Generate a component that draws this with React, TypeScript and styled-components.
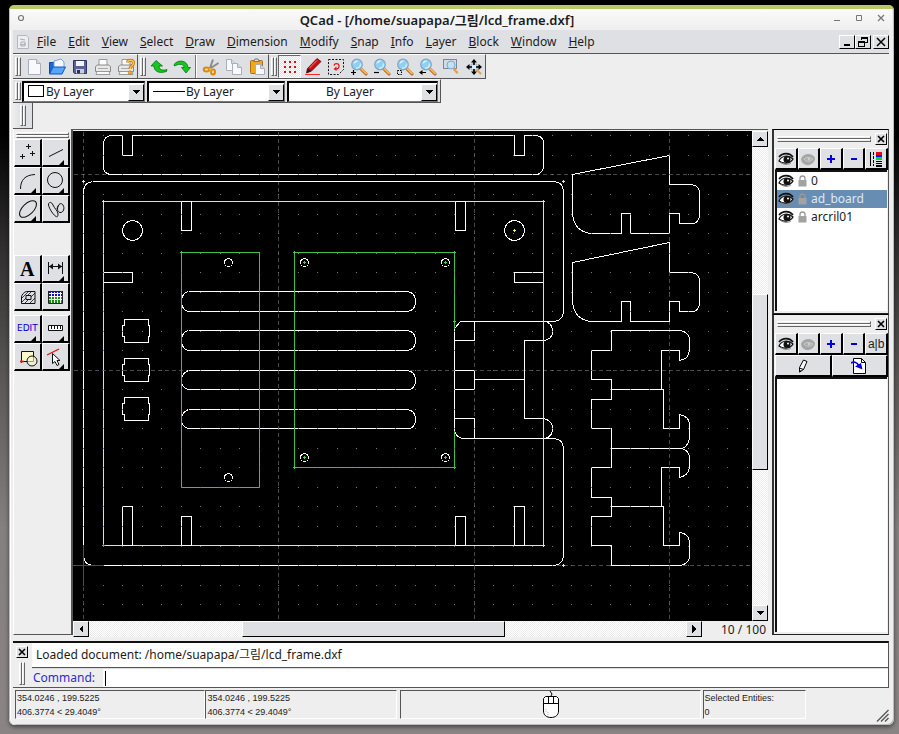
import React from "react";
import styled, { createGlobalStyle, css } from "styled-components";

const UI_FONT = '"Noto Sans", "Noto Sans CJK KR", sans-serif';
const FACE = "#dfe0e4";
const PANEL = "#eeeeee";
const SHADE = "#555555";

const GlobalStyle = createGlobalStyle`
  *, *::before, *::after { box-sizing: border-box; }
  body { margin: 0; font-family: ${UI_FONT}; font-size: 12px; color: #1c1c1c; }
  button, select, input { font: inherit; color: inherit; margin: 0; padding: 0; border-radius: 0; }
  svg { display: block; }
`;

const raised = css`
  border: 1px solid;
  border-color: #fff #000 #000 #fff;
  background: ${FACE};
`;

/* ---------- window ---------- */

const Desktop = styled.div`
  min-height: 100vh;
  display: flex;
  flex-direction: column;
  padding: 5px 5px 9px 9px;
  background: linear-gradient(#000 0, #000 18%, #2c2a2a 32%, #5c5858 52%, #858080 72%, #8a8484 100%);
`;

const Frame = styled.div`
  flex: 1;
  display: flex;
  flex-direction: column;
  padding: 0 5px 0 4px;
  border-top: 4px solid #bac767;
  border-radius: 5px 5px 6px 6px;
  background: ${PANEL};
  box-shadow: inset 1px 0 #bbb, inset 2px 0 #fff, inset -1px -1px #bbb, 0 2px 4px rgba(0, 0, 0, 0.5);
`;

const TitleBar = styled.header`
  display: grid;
  grid-template-columns: 36px 1fr 64px;
  align-items: center;
  height: 21px;
  margin: 0 -3px;
  background: linear-gradient(#fafafa, #efefef);
`;

const Title = styled.h1`
  margin: 0;
  text-align: center;
  font-size: 13px;
  font-weight: 600;
  line-height: 18px;
  white-space: nowrap;
`;

const TitleButtons = styled.div<{ $end?: boolean }>`
  display: flex;
  gap: 10px;
  justify-content: ${(p) => (p.$end ? "flex-end" : "flex-start")};
  padding: 0 5px 4px 4px;
`;

const FlatButton = styled.button`
  width: 12px;
  height: 12px;
  border: 0;
  background: none;
`;

const MenuBar = styled.nav`
  display: flex;
  align-items: center;
  height: 24px;
  padding-left: 3px;
  background: ${FACE};
  border-bottom: 1px solid ${SHADE};
`;

const MenuList = styled.div`
  flex: 1;
  display: flex;
  gap: 12px;
  padding-left: 7px;
`;

const MenuButton = styled.button`
  border: 0;
  background: none;
  line-height: 20px;
  white-space: nowrap;
`;

const Accel = styled.span`
  text-decoration: underline;
`;

const MdiButton = styled.button<{ $apart?: boolean }>`
  ${raised}
  display: grid;
  place-items: center;
  width: 16px;
  height: 14px;
  margin-left: ${(p) => (p.$apart ? 2 : 0)}px;
`;

/* ---------- toolbars ---------- */

const ToolRow = styled.div<{ $height: number }>`
  display: flex;
  height: ${(p) => p.$height}px;
`;

const ToolGroup = styled.div`
  display: flex;
  align-items: center;
  padding-left: 2px;
  background: ${FACE};
  border: solid;
  border-width: 1px 1px 1px 0;
  border-color: #fff ${SHADE} ${SHADE} #fff;
`;

const Grip = styled.span`
  display: flex;
  align-self: stretch;
  margin: 2px 1px 2px 0;
  &::before,
  &::after {
    content: "";
    width: 3px;
    border: 1px solid;
    border-color: #fff #666 #666 #fff;
  }
`;

const ToolButton = styled.button<{ $on?: boolean }>`
  display: grid;
  place-items: center;
  width: 23px;
  height: 23px;
  border: 1px solid;
  border-color: ${(p) => (p.$on ? "#666 #fff #fff #666" : "transparent")};
  background: ${(p) => (p.$on ? "repeating-conic-gradient(#fff 0 25%, #e2e2e6 0 50%) 0 0 / 2px 2px" : "none")};
`;

const Separator = styled.span`
  align-self: stretch;
  width: 2px;
  margin: 0 2px;
  border-left: 1px solid #777;
  border-right: 1px solid #fff;
`;

const ComboBox = styled.label<{ $width: number }>`
  position: relative;
  display: flex;
  width: ${(p) => p.$width}px;
  height: 21px;
  margin-right: 2px;
  border: 1px solid #777;
  border-width: 2px 1px 1px 2px;
  border-color: #000 #777 #777 #000;
  background: #fff;
`;

const ComboSelect = styled.select<{ $indent: number }>`
  width: 100%;
  padding-left: ${(p) => p.$indent}px;
  border: 0;
  outline: 0;
  appearance: none;
  background: none;
  line-height: 17px;
`;

const ComboPreview = styled.span`
  position: absolute;
  inset: 0 auto 0 4px;
  display: grid;
  place-items: center;
  pointer-events: none;
`;

const ComboArrow = styled.span`
  ${raised}
  position: absolute;
  inset: 1px 0 0 auto;
  width: 16px;
  display: grid;
  place-items: center;
  pointer-events: none;
`;

const EmptyBar = styled.div`
  display: flex;
  width: 20px;
  padding-left: 7px;
  background: linear-gradient(90deg, #eee, ${FACE} 40%);
  border-right: 1px solid ${SHADE};
  border-bottom: 1px solid ${SHADE};
`;

/* ---------- workspace ---------- */

const Workspace = styled.main`
  flex: 1;
  display: flex;
  min-height: 508px;
`;

const CadBar = styled.aside`
  width: 60px;
  flex: none;
  padding: 3px 1px 0 0;
  margin-bottom: 2px;
  border-right: 2px solid ${SHADE};
  border-bottom: 1px solid ${SHADE};
  border-left: 1px solid #fff;
`;

const WideGrip = styled.div`
  flex: 1;
  margin: 0 1px 1px 2px;
  &::before,
  &::after {
    content: "";
    display: block;
    height: 3px;
    border: 1px solid;
    border-color: #fff #666 #666 #fff;
  }
`;

const CadGrid = styled.div<{ $after: number }>`
  display: grid;
  grid-template-columns: 28px 28px;
  margin-bottom: ${(p) => p.$after}px;
`;

const CadButton = styled.button`
  ${raised}
  height: 28px;
  border-width: 1px 2px 2px 1px;
`;

const ViewArea = styled.section`
  flex: 1;
  min-width: 0;
  display: grid;
  grid-template-columns: 1fr 16px;
  grid-template-rows: 1fr 16px;
  margin-right: 4px;
  border-top: 1px solid ${SHADE};
  padding-top: 1px;
`;

const Drawing = styled.svg`
  width: 100%;
  height: 100%;
  background: #000;
  shape-rendering: crispEdges;
`;

const CanvasCell = styled.div`
  min-width: 0;
  min-height: 0;
  overflow: hidden;
  contain: size;
`;

const ScrollTrack = styled.div<{ $row?: boolean }>`
  flex: 1;
  display: flex;
  flex-direction: ${(p) => (p.$row ? "row" : "column")};
  background: repeating-conic-gradient(#fff 0 25%, #ececec 0 50%) 0 0 / 2px 2px;
`;

const ScrollButton = styled.button`
  ${raised}
  display: grid;
  place-items: center;
  flex: none;
  width: 16px;
  height: 16px;
`;

const Space = styled.span<{ $grow: number }>`
  flex: ${(p) => p.$grow} 1 0;
`;

const Thumb = styled.span<{ $grow: number }>`
  ${raised}
  flex: ${(p) => p.$grow} 1 0;
`;

const BottomRow = styled.div`
  grid-column: 1 / -1;
  display: flex;
`;

const ZoomInfo = styled.output`
  width: 66px;
  padding-right: 2px;
  text-align: right;
  line-height: 17px;
`;

/* ---------- docks ---------- */

const DockColumn = styled.aside`
  display: flex;
  flex-direction: column;
  width: 117px;
  flex: none;
  margin-bottom: 2px;
`;

const Dock = styled.section<{ $height?: number }>`
  display: flex;
  flex-direction: column;
  flex: ${(p) => (p.$height ? "none" : 1)};
  height: ${(p) => (p.$height ? p.$height + "px" : "auto")};
  padding: 0 0 2px 1px;
  border: 1px solid;
  border-width: 1px 1px 1px 2px;
  border-color: #000 ${SHADE} #222 #333;
`;

const DockHead = styled.div`
  display: flex;
  align-items: center;
  gap: 3px;
  height: 18px;
  padding-right: 1px;
`;

const CloseButton = styled.button`
  ${raised}
  display: grid;
  place-items: center;
  flex: none;
  width: 12px;
  height: 12px;
`;

const DockButtons = styled.div`
  display: flex;
`;

const DockButton = styled.button`
  ${raised}
  flex: 1;
  min-width: 0;
  height: 22px;
  display: grid;
  place-items: center;
  border-width: 1px 2px 2px 1px;
  font-family: "Liberation Sans", sans-serif;
`;

const LayerList = styled.ul`
  flex: 1;
  margin: 0 1px 0 0;
  padding: 0;
  list-style: none;
  background: #fff;
  border: solid #111;
  border-width: 2px 0 0 2px;
`;

const LayerItem = styled.li<{ $selected?: boolean }>`
  display: flex;
  align-items: center;
  gap: 4px;
  height: 18px;
  padding-left: 1px;
  line-height: 18px;
  color: ${(p) => (p.$selected ? "#dde9f5" : "#1c1c1c")};
  background: ${(p) => (p.$selected ? "#688db2" : "none")};
`;

/* ---------- command line and status ---------- */

const CommandDock = styled.section`
  display: flex;
  height: 47px;
  margin-top: 4px;
  border: solid;
  border-width: 2px 1px 1px 0;
  border-color: #111 ${SHADE} ${SHADE};
`;

const CommandSide = styled.div`
  display: flex;
  flex-direction: column;
  align-items: center;
  gap: 2px;
  width: 19px;
  padding: 3px 1px 0 0;
`;

const SideGrip = styled(Grip)`
  flex: 1;
  align-self: center;
`;

const CommandBody = styled.div`
  flex: 1;
  min-width: 0;
  display: flex;
  flex-direction: column;
`;

const History = styled.div`
  height: 25px;
  padding-left: 4px;
  line-height: 23px;
  background: #fff;
  border-bottom: 1px solid ${SHADE};
`;

const CommandRow = styled.div`
  flex: 1;
  display: flex;
  align-items: center;
  border-top: 1px solid #ddd;
  background: #fff;
`;

const CommandLabel = styled.label`
  align-self: stretch;
  width: 71px;
  padding-left: 1px;
  line-height: 18px;
  color: #2d2dd0;
  background: ${PANEL};
`;

const Caret = styled.span`
  width: 1px;
  height: 15px;
  margin-left: 2px;
  background: #000;
`;

const CommandInput = styled.input`
  flex: 1;
  min-width: 0;
  border: 0;
  outline: 0;
  background: none;
`;

const StatusBar = styled.footer`
  display: flex;
  height: 37px;
  padding: 2px 0 6px 2px;
  font: 9px/14px "Liberation Sans", sans-serif;
`;

const StatusCell = styled.div<{ $grow: number; $after?: number }>`
  flex: ${(p) => p.$grow} 1 0;
  display: flex;
  flex-direction: column;
  min-width: 0;
  margin-right: ${(p) => p.$after ?? 0}px;
  padding-left: 1px;
  white-space: nowrap;
  border: 1px solid;
  border-color: ${SHADE} #fff #fff ${SHADE};
`;

const MouseHint = styled.div`
  align-self: center;
`;

const SizeGrip = styled.div`
  flex: 84 1 0;
  display: flex;
  justify-content: flex-end;
  align-items: flex-end;
  margin-bottom: -3px;
`;

/* ---------- icons ---------- */

const Svg = ({ w = 18, h = w, crisp, children }: { w?: number; h?: number; crisp?: boolean; children: React.ReactNode }) => (
  <svg width={w} height={h} viewBox={`0 0 ${w} ${h}`} fill="none" aria-hidden="true" shapeRendering={crisp ? "crispEdges" : "auto"}>
    {children}
  </svg>
);

const Lens = ({ children }: { children?: React.ReactNode }) => (
  <Svg>
    <path d="M10.5 10.5L16 16" stroke="#a85c10" strokeWidth="3" strokeLinecap="round" />
    <path d="M11 10.5L16 15.5" stroke="#f3b45a" strokeWidth="2" strokeLinecap="round" />
    <circle cx="7" cy="6.5" r="5.3" fill="#8fd0f2" stroke="#8aa4c0" strokeWidth="1.2" />
    <path d="M3.5 6a3.6 3.6 0 0 1 5-3.2C7 3.800 5 5 3.500 6z" fill="#e2f6ff" />
    <path d="M6 10a4 4 0 0 0 4.600-4.500" stroke="#c8eefc" strokeWidth="1.400" />
    {children}
  </Svg>
);

const Sheet = ({ x, y, w, h }: { x: number; y: number; w: number; h: number }) => (
  <g>
    <path d={`M${x} ${y}h${w - 4}l4 4v${h - 4}h-${w}z`} fill="#f8f9fd" stroke="#a9aebc" />
    <path d={`M${x + w - 4} ${y}v4h4`} fill="#d5d9e6" stroke="#a9aebc" />
  </g>
);

const PrinterBody = () => (
  <g>
    <path d="M5 8V1.500h8V8" fill="#fff" stroke="#999" />
    <path d="M1.500 8.500l2-1.500h11l2 1.500v5h-15z" fill="#e8e8e8" stroke="#888" />
    <path d="M3 13.500l-1 3h14l-1-3z" fill="#fafafa" stroke="#999" />
    <path d="M4 10.500h10" stroke="#aaa" />
  </g>
);

const NewIcon = () => <Svg><Sheet x={3.5} y={1.5} w={12} h={15} /></Svg>;
const OpenIcon = () => (
  <Svg>
    <path d="M1.500 15.500v-11h5l1.500 2h6v9z" fill="#1c66d8" stroke="#1147a5" />
    <path d="M6 10V3l7-2 3 3v6z" fill="#f4f8ff" stroke="#7aa0d8" />
    <path d="M1.500 16L5 9h12.500l-3.500 7z" fill="#55a7fb" stroke="#1454b8" />
  </Svg>
);
const SaveIcon = () => (
  <Svg>
    <path d="M2.500 2.500h13v13h-12l-1-1z" fill="#5c6394" stroke="#2f3560" />
    <path d="M5 3h8v5H5z" fill="#f2f4fb" />
    <path d="M5 11h8v4.500H5z" fill="#c9cddd" />
    <path d="M6 12h3v3.500H6z" fill="#2b3058" />
  </Svg>
);
const PrintIcon = () => <Svg><PrinterBody /></Svg>;
const PreviewIcon = () => (
  <Svg>
    <PrinterBody />
    <path d="M10.500 4.500c.5-3 6-3 6 .5 0 3-3.500 3-3.500 6" stroke="#c06f00" strokeWidth="3" />
    <path d="M10.500 4.500c.5-3 6-3 6 .5 0 3-3.500 3-3.500 6" stroke="#ffc04a" strokeWidth="1.600" />
    <circle cx="13" cy="14.500" r="1.700" fill="#ffb02e" stroke="#c06f00" strokeWidth=".7" />
  </Svg>
);
const UndoIcon = () => (
  <Svg><path d="M6 2.500L1 8h3c0 5 4.500 8 12.500 5.500l.5-2c-5 1.500-8 0-8-3.500h3.500z" fill="#14c81e" stroke="#06720c" strokeWidth=".8" /></Svg>
);
const RedoIcon = () => (
  <Svg><path d="M13 15L8.500 9.500H11C11 6.500 7 5 1.500 8l-.5-1.500C6 .5 14.500 3 15 9.500h2.500z" fill="#14c81e" stroke="#06720c" strokeWidth=".8" /></Svg>
);
const CutIcon = () => (
  <Svg>
    <path d="M11 1.500L8 10M16.500 5L6.500 11.500" stroke="#8b8b8b" strokeWidth="2" />
    <ellipse cx="4.500" cy="11.500" rx="2.800" ry="2" stroke="#e08a00" strokeWidth="2" />
    <ellipse cx="11" cy="14" rx="2" ry="2.400" stroke="#e08a00" strokeWidth="2" />
    <path d="M7 10.500l2.500 1.500" stroke="#f8b030" strokeWidth="2" />
  </Svg>
);
const CopyIcon = () => <Svg><Sheet x={1.5} y={1.5} w={9} h={11} /><Sheet x={7.5} y={5.5} w={9} h={11} /></Svg>;
const PasteIcon = () => (
  <Svg>
    <rect x="2.500" y="2.500" width="12" height="13" rx="1" fill="#f0a81c" stroke="#a87010" />
    <path d="M5.500 3.500l1.500-2.500h3l1.500 2.500z" fill="#ddd" stroke="#777" />
    <Sheet x={7.5} y={6.5} w={9} h={10} />
  </Svg>
);
const GridIcon = () => (
  <Svg crisp>
    {[3, 8, 13].map((x) => [3, 8, 13].map((y) => <rect key={`${x}-${y}`} x={x} y={y} width="2" height="2" fill="#d11414" />))}
  </Svg>
);
const DraftIcon = () => (
  <Svg>
    <path d="M1 16.500h15" stroke="#ff2525" />
    <path d="M13 0.500l4 3L7.500 13l-5 2 1-4.500z" fill="#c81010" stroke="#5e0505" strokeWidth=".8" />
    <path d="M3.500 10.500l4 2.500-5 2z" fill="#222" />
    <path d="M13 2.500L5.500 10" stroke="#ff7b7b" />
  </Svg>
);
const RedrawIcon = () => (
  <Svg>
    <path d="M1.500 1.500h15v10l-5 5h-10z" stroke="#111" strokeDasharray="2 1.500" />
    <path d="M7 7.500c.5-2.500 4.500-2.500 5 0s-1.500 3.500-3 3.500" stroke="#e01818" strokeWidth="1.300" />
    <path d="M9.500 8.500L6.500 11l3 2z" fill="#e01818" />
  </Svg>
);
const ZoomInIcon = () => <Lens><path d="M1 14.500h5M3.500 12v5" stroke="#000" strokeWidth="1.200" /></Lens>;
const ZoomOutIcon = () => <Lens><path d="M1 14.500h5" stroke="#000" strokeWidth="1.200" /></Lens>;
const ZoomAutoIcon = () => <Lens><path d="M1.500 12.500h4v4h-4z" stroke="#000" strokeDasharray="1.500 1" /></Lens>;
const ZoomPrevIcon = () => <Lens><path d="M2 14.500h5" stroke="#000" /><path d="M0 14.500l3.500-2.500v5z" fill="#000" /></Lens>;
const ZoomWindowIcon = () => (
  <Svg>
    <rect x="1.500" y="1.500" width="13" height="9" fill="#d4dbe4" stroke="#7c8796" />
    <path d="M12 11l3 3.500" stroke="#e0a050" strokeWidth="2.400" strokeLinecap="round" />
    <circle cx="9" cy="7" r="4" fill="#bfe0f5" stroke="#7fa8cc" />
  </Svg>
);
const PanIcon = () => (
  <Svg>
    <path d="M11 11l4.500 4.500" stroke="#e0a050" strokeWidth="2" strokeLinecap="round" />
    <circle cx="9" cy="9" r="3.500" fill="#d5ebf8" stroke="#9ab" />
    <path d="M9 3v4M9 11v4M3 9h4M11 9h4" stroke="#000" strokeWidth="1.600" />
    <path d="M9 1l3 3.500H6zM9 17l3-3.500H6zM1 9l3.500-3v6zM17 9l-3.500-3v6z" fill="#000" />
  </Svg>
);
const DocIcon = () => (
  <Svg w={14} h={16}>
    <path d="M1.500 1.500h9l2 2v11h-11z" fill="#eceef2" stroke="#b4b7be" />
    <path d="M4 5l5 1M4 11l6-1M5 8h4v4H5z" stroke="#a9adb5" />
  </Svg>
);

const ArrowGlyph = ({ d }: { d: string }) => <Svg w={8} crisp><path d={d} fill="#000" /></Svg>;
const UP = "M0 6h8L4 2z";
const DOWN = "M0 2h8L4 6z";
const LEFT = "M6 0v8L2 4z";
const RIGHT = "M2 0v8l4-4z";

const CloseGlyph = () => <Svg w={8}><path d="M1 1l6 6M7 1L1 7" stroke="#000" strokeWidth="1.600" /></Svg>;

const EyeIcon = ({ off }: { off?: boolean }) =>
  off ? (
    <Svg w={16} h={14}>
      <path d="M1 7C3 1 12 0 15 6c0 4-4 8-9 7C3 12 1 10 1 7z" fill="#a6a6a6" />
      <path d="M4 7c2-2 6-2 9 0-3 3-6 3-9 0z" stroke="#ccc" />
      <circle cx="9" cy="7" r="1.500" fill="#ccc" />
    </Svg>
  ) : (
    <Svg w={16} h={14}>
      <path d="M1 9c2-5 9-7 14-2-2 4-9 6-14 2z" fill="#fff" stroke="#111" strokeWidth="1.200" />
      <path d="M1 5c4-5 11-4 14 0" stroke="#111" strokeWidth="1.600" />
      <circle cx="9" cy="7.500" r="3.500" fill="#111" />
      <circle cx="10" cy="6.500" r="1" fill="#fff" />
      <path d="M3 10.500c3 2.500 7 2.500 10 .5" stroke="#888" />
    </Svg>
  );
const LockIcon = () => (
  <Svg w={9} h={12}>
    <path d="M2 6V3.500a2.500 2.500 0 0 1 5 0V6" stroke="#999" strokeWidth="1.300" />
    <rect x=".5" y="5" width="8" height="6.500" fill="#a2a2a2" />
  </Svg>
);
const PlusIcon = () => <Svg w={10} crisp><path d="M5 1v8M1 5h8" stroke="#0000e0" strokeWidth="2" /></Svg>;
const MinusIcon = () => <Svg w={10} crisp><path d="M2 5h6" stroke="#0000e0" strokeWidth="2" /></Svg>;
const AttributesIcon = () => (
  <Svg w={14} h={16} crisp>
    <path d="M1.500 1v14" stroke="#000" />
    <path d="M4.500 1v14" stroke="#000" strokeDasharray="3 1" />
    <path d="M7 2.500h6" stroke="#f00018" strokeWidth="3" />
    <path d="M7 5h6" stroke="#0018e8" strokeWidth="2" />
    <path d="M7 7.500h6" stroke="#00d838" strokeWidth="3" />
    <path d="M7 10.500h6" stroke="#000" />
    <path d="M7 12.500h6" stroke="#000" />
    <path d="M7 15h6" stroke="#000" strokeWidth="2" />
  </Svg>
);
const PencilIcon = () => (
  <Svg w={14} h={14}>
    <path d="M3.500 8.500l4-7.500 3.500 1.500-3.500 8-4 2.500zM3.500 9l4 1.500" fill="#fff" stroke="#000" />
    <path d="M3.500 13.500V11l2 1z" fill="#000" />
  </Svg>
);
const InsertIcon = () => (
  <Svg w={16} h={16}>
    <path d="M2.500 .5h8l4 4v11h-12z" fill="#fff" stroke="#000" />
    <path d="M10.500 .5v4h4" stroke="#000" />
    <path d="M0 5c2-1.500 6-1.500 8 3" stroke="#0000e0" strokeWidth="1.800" />
    <path d="M4 8.500l6-3.500 1.500 6.500z" fill="#0000e0" />
  </Svg>
);

const Corner = <path d="M21 20v5h-5z" fill="#000" />;
const CadSvg = ({ more, children }: { more?: boolean; children: React.ReactNode }) => (
  <Svg w={25}>
    <g stroke="#111">{children}</g>
    {more && Corner}
  </Svg>
);

const SerifText = styled.text`
  font: bold 20px "Liberation Serif", serif;
  fill: #000;
  stroke: none;
`;
const EditText = styled.text`
  font: 9px "DejaVu Sans", sans-serif;
  fill: #0000d0;
  stroke: none;
`;

const drawTools: [string, React.ReactNode][] = [
  ["Points", <CadSvg><path d="M13.500 4v5M11 6.500h5M7.500 14v5M5 16.500h5M17.500 11v5M15 13.500h5" /></CadSvg>],
  ["Lines", <CadSvg more><path d="M6 16.500L20 9.500" /></CadSvg>],
  ["Arcs", <CadSvg more><path d="M5.500 21C5.500 12 10 7 20 6.500" /></CadSvg>],
  ["Circles", <CadSvg more><circle cx="12" cy="12" r="7.500" /></CadSvg>],
  ["Ellipses", <CadSvg more><ellipse cx="13" cy="13" rx="10.500" ry="5.500" transform="rotate(-44 13 13)" /></CadSvg>],
  ["Splines", <CadSvg><path d="M13 20.500C9 18 5 10 5.500 8s3-2.500 4.500 1 5 6 5 9-1 3-2 2.500zM14 13C15 8 18 6 20 9s.5 8-3 7.500-3-6-.5-8" /></CadSvg>],
];
const textTools: [string, React.ReactNode][] = [
  ["Text", <CadSvg><SerifText x="5" y="20">A</SerifText></CadSvg>],
  ["Dimensions", <CadSvg more><path d="M5.500 6v12M19.500 6v12M6 10.500h13" /><path d="M6 10.500l4-3v6zM19 10.500l-4-3v6z" fill="#111" stroke="none" /></CadSvg>],
  ["Hatch", (
    <CadSvg>
      <path d="M6.500 19.500V13c0-2 3-5.500 5-5.500h8.500v12zM11 11.500h5v4h-5z" />
      <path d="M7 14l6-6M7 18l4-4M10 19l4-4M13 11l3.500-3.500M15 19l5-5M16 13l4-4" strokeWidth=".8" />
    </CadSvg>
  )],
  ["Bitmap", (
    <CadSvg>
      <rect x="5" y="7" width="15" height="6" fill="#1010c8" stroke="none" />
      <rect x="5" y="13" width="15" height="6" fill="#109010" stroke="none" />
      <path d="M5 9.500h15M5 12.500h15M5 15.500h15M8.500 7v12M11.500 7v12M14.500 7v12M17.500 7v12" stroke="#fff" shapeRendering="crispEdges" />
      <path d="M5.500 19V7.500h14V19.500h-14z" stroke="#222" />
    </CadSvg>
  )],
];
const editTools: [string, React.ReactNode][] = [
  ["Edit", <CadSvg more><EditText x="2" y="15">EDIT</EditText></CadSvg>],
  ["Measure", <CadSvg more><path d="M5.500 9.500h14v5h-14zM8.500 10v3M11.500 10v3M14.500 10v3M17.500 10v3" fill="#fff" /></CadSvg>],
  ["Blocks", <CadSvg><path d="M6.500 7.500h12v10h-12z" fill="#fbf8cc" /><circle cx="17" cy="17" r="5" fill="#fbf8cc" fillOpacity=".6" /><path d="M5 17.500h4M6.500 16v3" stroke="#e01010" strokeWidth="1.500" /></CadSvg>],
  ["Select", <CadSvg more><path d="M4 11L16 5" stroke="#e01010" strokeWidth="1.300" /><path d="M9.500 9.500v10l2.500-2 2 4 2-1-2-4h3z" fill="#fff" /></CadSvg>],
];

/* ---------- CAD drawing ---------- */

const STEP = 19.53;
const dotColumns = Array.from({ length: 36 }, (_, i) => Math.floor(83.5 + i * STEP));
const dotRows = Array.from({ length: 26 }, (_, i) => Math.floor(604.6 - i * STEP));

const box = (x1: number, y1: number, x2: number, y2: number) => `M${x1} ${y1}H${x2}V${y2}H${x1}Z`;
const cross = (x: number, y: number) => `M${x - 1.5} ${y}h3M${x} ${y - 1.5}v3`;
const pill = (y: number, y2: number) =>
  `M188 ${y}H407Q415 ${y + 1} 415 ${y + 10}T407 ${y2}H188Q181 ${y2 - 2} 181 ${y + 10}T188 ${y}`;
const lug = (y: number) =>
  `M124 ${y}H148V${y + 6}H149V${y + 17}H148V${y + 23}H124V${y + 17}H122V${y + 6}H124Z`;
const bracket = (top: number, peak: number) =>
  `M572 ${top}L669 ${peak}V${top + 10}H691Q699 ${top + 11} 699 ${top + 19}V${top + 40}Q699 ${top + 49} 691 ${top + 49}H679V${top + 39}H669V${top + 59}H630V${top + 39}H621V${top + 59}H590Q574 ${top + 57} 572 ${top + 40}Z`;

const whitePaths = [
  "M132 135H514V155H524V135H536Q543 136 543 143V167Q542 172 537 174H109Q103 172 103 167V142Q104 136 110 135H122V155H132Z",
  "M92 181H554Q562 182 563 190V312Q562 320 554 321H460L454 328V430Q456 438 464 438H554Q562 439 563 447V556Q562 564 554 565H92Q84 564 83 556V190Q84 182 92 181",
  "M545 321Q552 323 552 331T543 340H524V418H543Q552 420 552 428T545 438",
  "M454 340H474V321M454 370H474V389H454M474 379H524M454 418H474V438",
  box(181, 201, 191, 230), box(455, 201, 465, 230), box(103, 272, 132, 282), box(514, 272, 543, 282),
  box(122, 506, 132, 545), box(181, 516, 191, 545), box(455, 516, 465, 545), box(514, 506, 524, 545),
  pill(291, 311), pill(330, 350), pill(370, 389), pill(409, 428),
  lug(319), lug(358), lug(397),
  bracket(174, 155), bracket(262, 242),
  "M611 350V330H680Q689 332 689 340V350Q688 359 679 360V350H661V389M611 350H591V379H611V399H591V428H611V467H591V497H611V516H591V545H611V565H680Q689 563 689 555V541Q688 533 679 532V545H663V506H611",
  "M611 389H663V428H679V414Q689 416 689 424V438Q687 447 681 448Q689 450 689 458V467Q688 475 679 477V467H661V506M611 448H681",
].join("");

const CadDrawing = () => (
  <Drawing role="img" aria-label="lcd_frame.dxf drawing">
    <g transform="translate(-73 -131)">
      <g transform="translate(.5 .5)" fill="none" strokeWidth="1">
        <g stroke="#4a4a4a" strokeDasharray="4 3">
          {[83, 278, 474, 669].map((x) => <path key={x} d={`M${x} 131V2000`} />)}
          {[174, 370, 565].map((y) => <path key={y} d={`M73 ${y}H3000`} />)}
        </g>
        <path stroke="#fff" d={whitePaths} />
        <path stroke="#f0ee50" d="M103 201H181M191 201H455M465 201H543V545H524M514 545H465M455 545H191M181 545H132M122 545H103V201" />
        <path stroke="#3fc24a" d={box(181, 252, 259, 487) + "M454 328V252H294V467H454V430"} />
        <g stroke="#fff">
          <circle cx="132" cy="230" r="10" />
          <circle cx="514" cy="230" r="10" />
          {[[228, 262], [228, 477], [304, 262], [445, 262], [304, 457], [445, 457]].map(([x, y]) => (
            <circle key={`${x}-${y}`} cx={x} cy={y} r="4" />
          ))}
        </g>
        <path stroke="#3fd24a" d={[[304, 262], [445, 262], [304, 457], [445, 457], [181, 252], [294, 252], [454, 252], [294, 467], [454, 467], [454, 321], [103, 545]].map(([x, y]) => cross(x, y)).join("")} />
        <path stroke="#f4f43c" d={[[83, 181], [563, 181], [563, 565], [514, 230], [543, 201], [103, 201], [543, 545]].map(([x, y]) => cross(x, y)).join("")} />
      </g>
      <g fill="#777">
        {dotColumns.map((x) => dotRows.map((y) => <rect key={`${x}-${y}`} x={x} y={y} width="1" height="1" />))}
      </g>
      <g fill="#d01616">
        <rect x="73" y="565" width="31" height="1" />
        <rect x="83" y="545" width="1" height="41" />
      </g>
    </g>
  </Drawing>
);

/* ---------- data ---------- */

const menus = ["File", "Edit", "View", "Select", "Draw", "Dimension", "Modify", "Snap", "Info", "Layer", "Block", "Window", "Help"];
const fileTools: [string, React.ReactNode][] = [["New", <NewIcon />], ["Open", <OpenIcon />], ["Save", <SaveIcon />], ["Print", <PrintIcon />], ["Print preview", <PreviewIcon />]];
const historyTools: [string, React.ReactNode][] = [["Undo", <UndoIcon />], ["Redo", <RedoIcon />]];
const clipTools: [string, React.ReactNode][] = [["Cut", <CutIcon />], ["Copy", <CopyIcon />], ["Paste", <PasteIcon />]];
const viewTools: [string, React.ReactNode][] = [
  ["Grid", <GridIcon />], ["Draft", <DraftIcon />], ["Redraw", <RedrawIcon />], ["Zoom in", <ZoomInIcon />], ["Zoom out", <ZoomOutIcon />],
  ["Auto zoom", <ZoomAutoIcon />], ["Previous view", <ZoomPrevIcon />], ["Window zoom", <ZoomWindowIcon />], ["Pan", <PanIcon />],
];
const layers = ["0", "ad_board", "arcril01"];

const Tools = ({ items, on }: { items: [string, React.ReactNode][]; on?: string }) => (
  <>
    {items.map(([name, icon]) => (
      <ToolButton key={name} aria-label={name} $on={name === on}>{icon}</ToolButton>
    ))}
  </>
);

const CadTools = ({ items, after = 0 }: { items: [string, React.ReactNode][]; after?: number }) => (
  <CadGrid $after={after}>
    {items.map(([name, icon]) => <CadButton key={name} aria-label={name}>{icon}</CadButton>)}
  </CadGrid>
);

const Combo = ({ label, width, indent, preview }: { label: string; width: number; indent: number; preview?: React.ReactNode }) => (
  <ComboBox $width={width}>
    <ComboPreview>{preview}</ComboPreview>
    <ComboSelect aria-label={label} $indent={indent}><option>By Layer</option></ComboSelect>
    <ComboArrow><ArrowGlyph d={DOWN} /></ComboArrow>
  </ComboBox>
);

const DockHeader = () => (
  <DockHead>
    <WideGrip />
    <CloseButton aria-label="Close panel"><CloseGlyph /></CloseButton>
  </DockHead>
);

export default function App() {
  return (
    <Desktop>
      <GlobalStyle />
      <Frame>
        <TitleBar>
          <TitleButtons>
            <FlatButton aria-label="Window menu"><Svg w={12}><circle cx="7" cy="6" r="2.500" stroke="#777" strokeWidth="1.200" /></Svg></FlatButton>
          </TitleButtons>
          <Title>QCad - [/home/suapapa/그림/lcd_frame.dxf]</Title>
          <TitleButtons $end>
            <FlatButton aria-label="Minimize"><Svg w={12}><path d="M3 8.500h6" stroke="#777" /></Svg></FlatButton>
            <FlatButton aria-label="Maximize"><Svg w={12}><path d="M3.500 3.500h5v5h-5z" stroke="#777" /></Svg></FlatButton>
            <FlatButton aria-label="Close"><Svg w={12}><path d="M3 3l6 6M9 3l-6 6" stroke="#777" strokeWidth="1.300" /></Svg></FlatButton>
          </TitleButtons>
        </TitleBar>

        <MenuBar>
          <DocIcon />
          <MenuList>
            {menus.map((m) => <MenuButton key={m}><Accel>{m[0]}</Accel>{m.slice(1)}</MenuButton>)}
          </MenuList>
          <MdiButton aria-label="Minimize document"><Svg w={10} crisp><path d="M2 8h6" stroke="#000" strokeWidth="2" /></Svg></MdiButton>
          <MdiButton aria-label="Restore document">
            <Svg w={10} crisp><path d="M3.500 3V.5h6v5H7M3 1.500h6M.5 4.500h6v5h-6zM1 5.500h6" stroke="#000" /></Svg>
          </MdiButton>
          <MdiButton aria-label="Close document" $apart><Svg w={10}><path d="M1 1l8 8M9 1L1 9" stroke="#000" strokeWidth="1.500" /></Svg></MdiButton>
        </MenuBar>

        <ToolRow $height={25}>
          <ToolGroup><Grip /><Tools items={fileTools} /></ToolGroup>
          <ToolGroup><Grip /><Tools items={historyTools} /><Separator /><Tools items={clipTools} /></ToolGroup>
          <ToolGroup><Grip /><Tools items={viewTools} on="Grid" /></ToolGroup>
        </ToolRow>

        <ToolRow $height={24}>
          <ToolGroup>
            <Grip />
            <Combo label="Color" width={123} indent={22} preview={<Svg w={17} h={13} crisp><rect x=".5" y=".5" width="15" height="11" fill="#fff" stroke="#000" /></Svg>} />
            <Combo label="Width" width={138} indent={37} preview={<Svg w={32} h={2} crisp><path d="M0 .5h32" stroke="#000" /></Svg>} />
            <Combo label="Line type" width={151} indent={37} />
          </ToolGroup>
        </ToolRow>

        <ToolRow $height={26}><EmptyBar><Grip /></EmptyBar></ToolRow>

        <Workspace>
          <CadBar>
            <WideGrip />
            <CadTools items={drawTools} after={32} />
            <CadTools items={textTools} after={4} />
            <CadTools items={editTools} />
          </CadBar>

          <ViewArea>
            <CanvasCell><CadDrawing /></CanvasCell>
            <ScrollTrack>
              <ScrollButton aria-label="Scroll up"><ArrowGlyph d={UP} /></ScrollButton>
              <Space $grow={147} /><Thumb $grow={175} /><Space $grow={135} />
              <ScrollButton aria-label="Scroll down"><ArrowGlyph d={DOWN} /></ScrollButton>
            </ScrollTrack>
            <BottomRow>
              <ScrollTrack $row>
                <ScrollButton aria-label="Scroll left"><ArrowGlyph d={LEFT} /></ScrollButton>
                <Space $grow={154} /><Thumb $grow={261} /><Space $grow={182} />
                <ScrollButton aria-label="Scroll right"><ArrowGlyph d={RIGHT} /></ScrollButton>
              </ScrollTrack>
              <ZoomInfo>10 / 100</ZoomInfo>
            </BottomRow>
          </ViewArea>

          <DockColumn>
            <Dock $height={185} aria-label="Layers">
              <DockHeader />
              <DockButtons>
                <DockButton aria-label="Show all layers"><EyeIcon /></DockButton>
                <DockButton aria-label="Hide all layers"><EyeIcon off /></DockButton>
                <DockButton aria-label="Add layer"><PlusIcon /></DockButton>
                <DockButton aria-label="Remove layer"><MinusIcon /></DockButton>
                <DockButton aria-label="Layer attributes"><AttributesIcon /></DockButton>
              </DockButtons>
              <LayerList>
                {layers.map((l) => (
                  <LayerItem key={l} $selected={l === "ad_board"}><EyeIcon /><LockIcon />{l}</LayerItem>
                ))}
              </LayerList>
            </Dock>
            <Dock aria-label="Blocks">
              <DockHeader />
              <DockButtons>
                <DockButton aria-label="Show all blocks"><EyeIcon /></DockButton>
                <DockButton aria-label="Hide all blocks"><EyeIcon off /></DockButton>
                <DockButton aria-label="Add block"><PlusIcon /></DockButton>
                <DockButton aria-label="Remove block"><MinusIcon /></DockButton>
                <DockButton aria-label="Rename block">a|b</DockButton>
              </DockButtons>
              <DockButtons>
                <DockButton aria-label="Edit block"><PencilIcon /></DockButton>
                <DockButton aria-label="Insert block"><InsertIcon /></DockButton>
              </DockButtons>
              <LayerList />
            </Dock>
          </DockColumn>
        </Workspace>

        <CommandDock>
          <CommandSide>
            <CloseButton aria-label="Close command line"><CloseGlyph /></CloseButton>
            <SideGrip />
          </CommandSide>
          <CommandBody>
            <History>Loaded document: /home/suapapa/그림/lcd_frame.dxf</History>
            <CommandRow>
              <CommandLabel htmlFor="command">Command:</CommandLabel>
              <Caret />
              <CommandInput id="command" />
            </CommandRow>
          </CommandBody>
        </CommandDock>

        <StatusBar>
          <StatusCell $grow={190}><span>354.0246 , 199.5225</span><span>406.3774 &lt; 29.4049°</span></StatusCell>
          <StatusCell $grow={191} $after={3}><span>354.0246 , 199.5225</span><span>406.3774 &lt; 29.4049°</span></StatusCell>
          <StatusCell $grow={302} $after={2}>
            <MouseHint>
              <Svg w={16} h={27}>
                <path d="M7 0l2 3-1 2" stroke="#000" />
                <path d="M2.500 5.500h11l2 2V20c0 4-3 6.500-7.500 6.500S.5 24 .5 20V7.500z" fill="#fff" stroke="#000" />
                <path d="M.5 12.500h15M5.500 5.500v7M10.500 5.500v7" stroke="#000" />
                <path d="M3 18v3M5 21v3" stroke="#bbb" strokeDasharray="1 1" />
              </Svg>
            </MouseHint>
          </StatusCell>
          <StatusCell $grow={102}><span>Selected Entities:</span><span>0</span></StatusCell>
          <SizeGrip><Svg w={13}><path d="M1 12.500L12.500 1M5 12.500L12.500 5M9 12.500L12.500 9" stroke="#555" strokeWidth="1.300" /></Svg></SizeGrip>
        </StatusBar>
      </Frame>
    </Desktop>
  );
}
